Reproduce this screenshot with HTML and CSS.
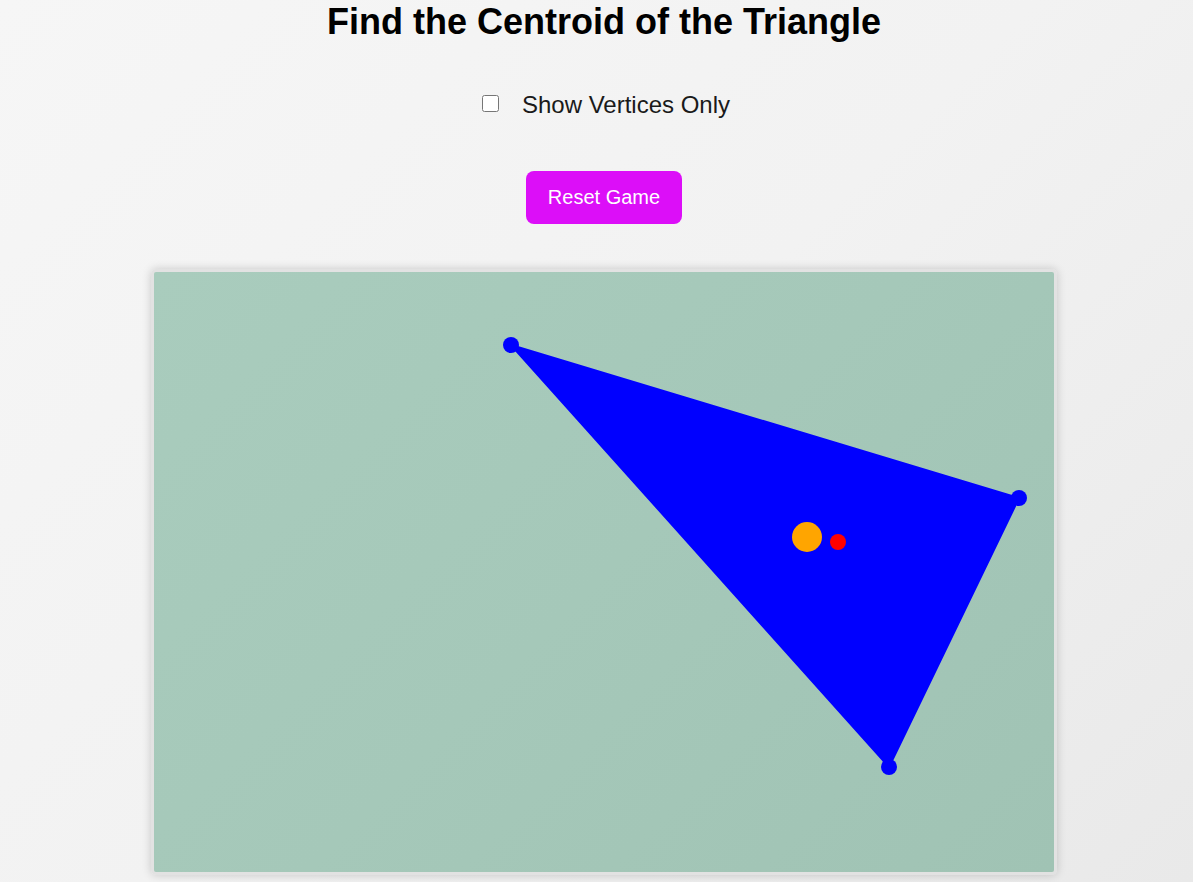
FILE: index.html
```html
<!DOCTYPE html>
<html lang="en">
<head>
<meta charset="utf-8">
<title>Find the Centroid of the Triangle</title>
<link rel="stylesheet" href="styles.css">
</head>
<body>
<div class="app">
  <h1 class="title">Find the Centroid of the Triangle</h1>
  <label class="controls">
    <input type="checkbox" class="toggle">
    <span class="toggle-label">Show Vertices Only</span>
  </label>
  <button class="reset-btn" type="button">Reset Game</button>
  <div class="board">
    <svg class="board-svg" width="900" height="600" viewBox="0 0 900 600">
      <polygon points="357,73 865,226 735,495" fill="#0000ff" stroke="#0000ff" stroke-width="2" stroke-linejoin="round"/>
      <circle cx="357" cy="73" r="8" fill="#0000ff"/>
      <circle cx="865" cy="226" r="8" fill="#0000ff"/>
      <circle cx="735" cy="495" r="8" fill="#0000ff"/>
      <circle cx="653" cy="265" r="15" fill="#ffa500"/>
      <circle cx="684" cy="270" r="8" fill="#ff0000"/>
    </svg>
  </div>
</div>
</body>
</html>
```
FILE: styles.css
```css
html, body {
  margin: 0;
  padding: 0;
}
body {
  font-family: "Liberation Sans", Arial, sans-serif;
  background: linear-gradient(135deg, #f6f6f6 0%, #f2f2f2 50%, #e9e9e9 100%);
  min-height: 100vh;
  overflow: hidden;
}
.app {
  display: flex;
  flex-direction: column;
  align-items: center;
  padding-top: 1px;
  padding-left: 15px;
}
.title {
  margin: 0;
  font-size: 36px;
  line-height: 41px;
  font-weight: bold;
  color: #000;
}
.controls {
  margin-top: 49px;
  display: flex;
  align-items: center;
  font-size: 24px;
  line-height: 27px;
  color: #1a1a1a;
  cursor: pointer;
}
.toggle {
  width: 17px;
  height: 17px;
  margin: -3px 23px 0 4px;
}
.reset-btn {
  margin-top: 53px;
  font-family: "Liberation Sans", Arial, sans-serif;
  font-size: 20px;
  line-height: 23px;
  padding: 15px 22px;
  border: none;
  border-radius: 8px;
  background: #dc0ef8;
  color: #fff;
  cursor: pointer;
}
.board {
  margin-top: 45px;
  border: 3px solid #e2e2e2;
  border-radius: 5px;
  box-shadow: 0 0 10px rgba(0, 0, 0, 0.18);
  background: linear-gradient(135deg, #a9ccbd 0%, #a5c8b9 50%, #a0c3b4 100%);
  overflow: hidden;
}
.board-svg {
  display: block;
}
```
